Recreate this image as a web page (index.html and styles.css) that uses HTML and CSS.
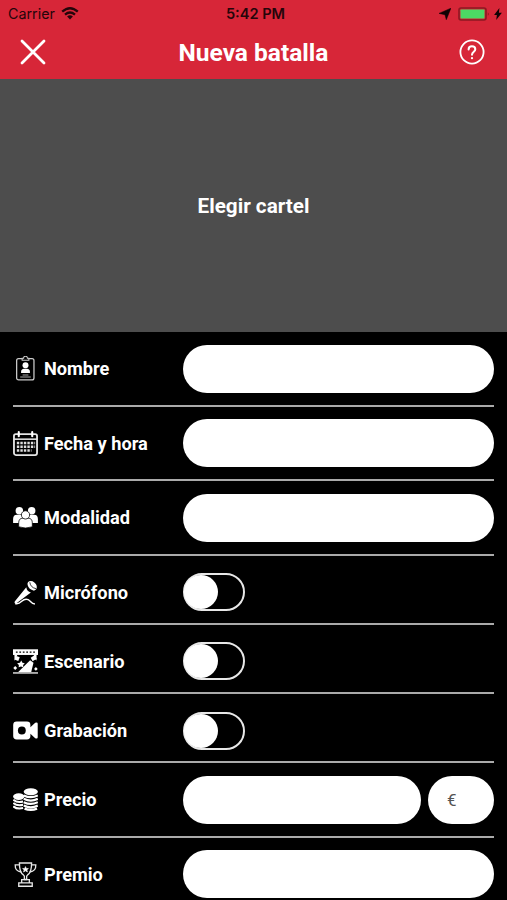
FILE: index.html
```html
<!DOCTYPE html>
<html lang="es">
<head>
<meta charset="UTF-8">
<meta name="viewport" content="width=device-width, initial-scale=1.0">
<title>Nueva batalla</title>
<link rel="stylesheet" href="styles.css">
</head>
<body>
<header class="header">
    <div class="status">
        <div class="status-left">
            <span class="carrier">Carrier</span>
            <svg class="wifi" width="18" height="13" viewBox="0 0 18 13">
                <path d="M1.2 4.7Q9-2.2 16.8 4.7M4 7.6Q9 3.4 14 7.6" fill="none" stroke="#25050a" stroke-width="2.3"/>
                <path d="M6.1 9.4Q9 7.1 11.9 9.4L9 12.4z" fill="#25050a"/>
            </svg>
        </div>
        <span class="time">5:42 PM</span>
        <div class="status-right">
            <svg width="12" height="12" viewBox="0 0 12 12"><path d="M11.9.2 7.3 11.7 6 6.7 0 5.4z" fill="#100204" stroke="#100204" stroke-width=".5"/></svg>
            <svg width="32" height="14" viewBox="0 0 32 14">
                <rect x="1" y="1" width="27" height="12" rx="2" fill="none" stroke="#8d1822" stroke-width="1.6"/>
                <rect x="2.5" y="2.5" width="24" height="9" rx=".7" fill="#4cd964"/>
                <path d="M29.8 5.2q2 1.8 0 3.6z" fill="#8d1822"/>
            </svg>
            <svg width="8" height="12" viewBox="0 0 8 12"><path d="M5.4 0 .1 7h2.8L2.2 12 7.9 4.7H4.9z" fill="#100204"/></svg>
        </div>
    </div>
    <div class="nav">
        <svg width="26" height="26" viewBox="0 0 26 26"><path d="M2 2 24 24M24 2 2 24" stroke="#fff" stroke-width="2.8" stroke-linecap="round"/></svg>
        <h1 class="title">Nueva batalla</h1>
        <svg width="26" height="26" viewBox="0 0 26 26" fill="none" stroke="#fff" stroke-linecap="round">
            <circle cx="13" cy="13" r="11.6" stroke-width="1.8"/>
            <path d="M9.6 10.4C9.6 6.2 16.3 6.4 16.3 10.2C16.3 12.8 13 12.6 13 15.8" stroke-width="2"/>
            <path d="M13 19v.2" stroke-width="2.2"/>
        </svg>
    </div>
</header>

<div class="poster">Elegir cartel</div>

<form class="form">
    <div class="row">
        <div class="label">
            <svg class="icon" viewBox="0 0 26 26">
                <rect x="3.8" y="2.8" width="18" height="22" rx="2" fill="none" stroke="#ccc" stroke-width="1.3"/>
                <path d="M9.5 4.5V2.3H11a2 2 0 0 1 4 0h1.5v2.2z" fill="#000" stroke="#ccc" stroke-width="1.1"/>
                <circle cx="13" cy="9.6" r="3.1" fill="#fff"/>
                <path d="M8.4 17.8v-1.4q0-2.6 3.1-3.1h3q3.1.5 3.1 3.1v1.4z" fill="#fff"/>
                <path d="M10 19.7h6M7.5 21.9h11" stroke="#aaa" stroke-width="1.1"/>
            </svg>
            Nombre
        </div>
        <input class="field" type="text">
    </div>
    <div class="row">
        <div class="label">
            <svg class="icon" viewBox="0 0 26 26">
                <rect x="1" y="3.2" width="24" height="21.8" rx="2" fill="none" stroke="#e4e4e4" stroke-width="1.9"/>
                <path d="M1 8.5h24" stroke="#e4e4e4" stroke-width="1.6"/>
                <path d="M6 1.2v4.3M20 1.2v4.3" stroke="#fff" stroke-width="2.2" stroke-linecap="round"/>
                <path d="M4 12.5h19M4 16.4h19M4 20.3h15.2" stroke="#ddd" stroke-width="2.4" stroke-dasharray="2.5 1.15"/>
            </svg>
            Fecha y hora
        </div>
        <input class="field" type="text">
    </div>
    <div class="row">
        <div class="label">
            <svg class="icon" viewBox="0 0 26 26" fill="#fff">
                <circle cx="6.6" cy="6" r="3.9"/>
                <circle cx="19.4" cy="6" r="3.9"/>
                <path d="M.1 18.6v-4q0-4.4 4-4.4h4q3 0 3.5 3v5.4zM25.9 18.6v-4q0-4.4-4-4.4h-4q-3 0-3.5 3v5.4z"/>
                <g stroke="#000" stroke-width=".8">
                    <path d="M5.9 22.7v-4q0-5 4.4-5h5.4q4.4 0 4.4 5v4Q13 25.2 5.9 22.7z"/>
                    <circle cx="13" cy="10.3" r="4.3"/>
                </g>
            </svg>
            Modalidad
        </div>
        <input class="field" type="text">
    </div>
    <div class="row row-short">
        <div class="label">
            <svg class="icon" viewBox="0 0 26 26">
                <path d="M13.8 7.6 1.8 22.3q-1 2.7 1.8 1.9L18.6 12.9Q14.5 12 13.8 7.6z" fill="#fff"/>
                <path d="M15.2 5.3C14.2 1 19 0 22.2 2.5S26 9.6 21.8 11.1Q16.4 10 15.2 5.3z" fill="#fff"/>
                <path d="M17.5 2.4Q18.2 7.9 24 9" fill="none" stroke="#000" stroke-width=".8"/>
                <path d="M2.3 24.4C9 26.5 9.3 17.5 15.7 20.4C19 22 18.5 24.5 22.8 24.9" fill="none" stroke="#fff" stroke-width="1.5"/>
            </svg>
            Micrófono
        </div>
        <label class="toggle"><input type="checkbox"><span class="knob"></span></label>
    </div>
    <div class="row row-short">
        <div class="label">
            <svg class="icon" viewBox="0 0 26 26" fill="#fff">
                <path d="M0 .3h26v5.9H0z"/>
                <path d="M3 3.2h20" stroke="#000" stroke-width="1.3" stroke-dasharray="1.8 1.8"/>
                <path d="M1.5 5.5h3.2L2.8 10.8 1.5 12zM24.5 5.5h-3.2l1.9 5.3 1.3 1.2z"/>
                <path d="M3.6 7.3 7 8.6 5.5 12.4 2.1 11.1zM18.4 9l4-2.4 2.2 3.6-4.2 2.5z"/>
                <path d="M17.8 11.6 5.2 24.2h13.7l2.4-10z"/>
                <path d="M8.6 12l1.2 2.2 2.5.6-1.8 1.8.2 2.5-2.4-1-2.4 1 .2-2.5-1.8-1.8 2.9-.6zM2.3 17.8l2 2-2 2-2-2zM23.8 18.8l1.9 1.9-1.9 1.9-1.9-1.9z"/>
                <path d="M0 24h26v1.8H0z" fill="#bbb"/>
            </svg>
            Escenario
        </div>
        <label class="toggle"><input type="checkbox"><span class="knob"></span></label>
    </div>
    <div class="row row-short">
        <div class="label">
            <svg class="icon" viewBox="0 0 26 26">
                <path d="M3.9 3.7h10.6q3.6 0 3.6 3.6v2.2l5-4.6q2.6-1 2.6 1v14.2q0 2-2.6 1l-5-4.6v2.2q0 3.6-3.6 3.6H3.9Q.2 22.3.2 18.7V7.3q0-3.6 3.7-3.6z" fill="#fff"/>
                <circle cx="9.2" cy="13" r="4.1" fill="#000"/>
            </svg>
            Grabación
        </div>
        <label class="toggle"><input type="checkbox"><span class="knob"></span></label>
    </div>
    <div class="row">
        <div class="label">
            <svg class="icon" viewBox="0 0 26 26">
                <ellipse cx="6" cy="10" rx="5.9" ry="3.4" fill="#fff"/>
                <path d="M.3 13.2Q4 16.7 10.5 15.1M.3 16.6Q4 20.1 10.5 18.5M.3 20Q4 23.4 10.5 21.9" fill="none" stroke="#fff" stroke-width="2.2"/>
                <ellipse cx="18.5" cy="5.7" rx="8" ry="4.4" fill="#000"/>
                <ellipse cx="18.5" cy="5" rx="7.4" ry="3.7" fill="#fff"/>
                <path d="M11.2 8.8Q18.5 12.4 25.8 8.8M11.2 12.3Q18.5 15.9 25.8 12.3M11.2 15.8Q18.5 19.4 25.8 15.8M11.2 19.3Q18.5 22.9 25.8 19.3M12 22.5Q18.5 25.3 25 22.5" fill="none" stroke="#fff" stroke-width="2.3"/>
            </svg>
            Precio
        </div>
        <input class="field" type="text">
        <input class="field currency" type="text" placeholder="€">
    </div>
    <div class="row">
        <div class="label">
            <svg class="icon" viewBox="0 0 26 26" fill="none" stroke="#e6e6e6" stroke-width="1.4">
                <path d="M6.7 1h12.6q.2 9.5-4.1 12.4l-1 1.4v3.4h-2.4v-3.4l-1-1.4Q6.5 10.5 6.7 1z"/>
                <path d="M6.7 3H2.3Q2 9.7 8.6 10.4M19.3 3h4.4q.3 6.7-6.3 7.4"/>
                <path d="M9 21.6v-3.2h8v3.2M6 25.2v-3.5h14v3.5z"/>
                <path d="M13 4.8l.9 2h2.1l-1.6 1.4.6 2.2-2-1.2-2 1.2.6-2.2L10 6.8h2.1z" fill="#fff" stroke-width=".7"/>
            </svg>
            Premio
        </div>
        <input class="field" type="text">
    </div>
</form>
</body>
</html>
```
FILE: styles.css
```css
* {
    box-sizing: border-box;
}
body {
    margin: 0;
    height: 900px;
    overflow: hidden;
    background: #000;
    color: #fff;
    font-family: Roboto, sans-serif;
}
svg {
    display: block;
    flex: none;
}
.header {
    height: 79px;
    background: #d72638;
}
.status {
    display: grid;
    grid-template-columns: 1fr auto 1fr;
    align-items: center;
    height: 27px;
    padding: 0 5px 0 8px;
    color: #25050a;
    font-family: Inter, sans-serif;
    font-size: 14.3px;
}
.status-left {
    display: flex;
    align-items: center;
    gap: 6px;
}
.status-right {
    display: flex;
    align-items: center;
    justify-content: flex-end;
    gap: 7px;
}
.status-right svg:last-child {
    margin-left: -3px;
}
.time {
    padding-left: 1px;
    font-size: 14.6px;
    font-weight: 600;
}
.nav {
    display: flex;
    align-items: center;
    justify-content: space-between;
    height: 50px;
    padding: 0 22px 0 20px;
}
.title {
    margin: 0;
    padding-left: 2px;
    font-size: 24.5px;
    font-weight: 700;
}
.poster {
    display: flex;
    align-items: center;
    justify-content: center;
    height: 253px;
    background: #4d4d4d;
    font-size: 20.7px;
    font-weight: 700;
}
.form {
    padding: 0 13px;
}
.row {
    display: flex;
    align-items: center;
    gap: 7px;
    height: 74.6px;
    padding-top: 1px;
    border-bottom: 2px solid #aaa;
}
.row-short {
    height: 69.1px;
    padding-top: 6px;
}
.label {
    display: flex;
    align-items: center;
    flex: none;
    gap: 6px;
    width: 163px;
    font-size: 18.2px;
    font-weight: 700;
}
.icon {
    width: 25px;
    height: 25px;
}
.field {
    flex: 1;
    min-width: 0;
    height: 48px;
    padding: 0 19px;
    border: none;
    border-radius: 24px;
    background: #fff;
    font-family: Roboto, sans-serif;
    font-size: 17px;
}
.field::placeholder {
    color: #555;
}
.currency {
    flex: none;
    width: 66px;
}
.toggle {
    display: flex;
    align-items: center;
    width: 62px;
    height: 38px;
    border: 2px solid #e8e8e8;
    border-radius: 19px;
}
.toggle input {
    display: none;
}
.knob {
    width: 34px;
    height: 34px;
    margin-left: -1px;
    border-radius: 50%;
    background: #fff;
}
.toggle input:checked + .knob {
    margin-left: auto;
}
```
